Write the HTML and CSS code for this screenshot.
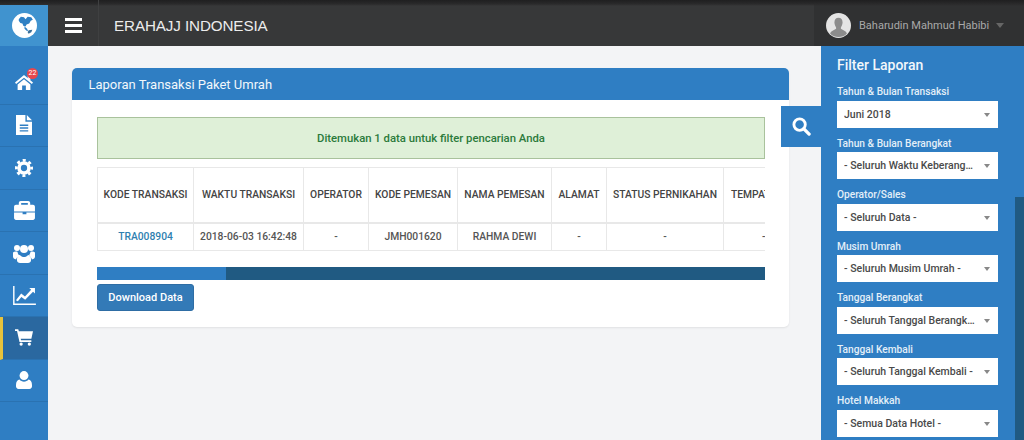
FILE: index.html
```html
<!DOCTYPE html>
<html lang="id">
<head>
<meta charset="utf-8">
<title>Laporan Transaksi Paket Umrah</title>
<link rel="stylesheet" href="styles.css">
</head>
<body>
<div class="app">
  <header class="topbar">
    <div class="logo">
      <svg viewBox="0 0 24 24" width="25" height="25"><circle cx="12" cy="12" r="12" fill="#fff"/><path fill="#2f80c4" d="M6.500 6l2-2.500 3 .5 1.500 2 2-2.500 3.500.5 1.500 2.500-2 1-1.500 2.500-2.500 1-1 2-2-.5-1-2.500-2-.5-1.500-2zM12 13l2.500 2 1 2.500-1.500-.5-2-2z"/><path fill="#3a6f99" d="M16 16.500l3.500-.5-1 2.500-2.500 1.500-1-1.500z"/></svg>
    </div>
    <button class="burger" aria-label="Menu"><span></span><span></span><span></span></button>
    <div class="brand">ERAHAJJ INDONESIA</div>
    <div class="user">
      <svg class="avatar" viewBox="0 0 26 26" width="25" height="25"><circle cx="13" cy="13" r="13" fill="#e4e4e4"/><path fill="#8c8c8c" d="M13 5c3 0 4.500 2.500 4.200 5.500-.2 2-1 3.500-1.700 4.500v1.500l4.500 2.500c.8.500 1.500 1.500 1.700 2.500a13 13 0 0 1-17.400 0c.2-1 .9-2 1.700-2.500l4.500-2.500V15c-.7-1-1.500-2.500-1.700-4.500C8.500 7.500 10 5 13 5z"/></svg>
      <span class="user-name">Baharudin Mahmud Habibi</span>
      <span class="caret"></span>
    </div>
  </header>

  <div class="body-row">
    <nav class="sidebar">
      <a class="nav-item nav-home">
        <span class="icon-wrap">
          <svg viewBox="0 0 24 20" width="18" height="15"><path fill="#fff" d="M12 0l12 10-1.500 2L12 3.500 1.500 12 0 10zM17 1h3.500v6L17 4zM3.500 12.500L12 5.500l8.500 7V20h-6v-6h-5v6h-6z"/></svg>
          <span class="badge">22</span>
        </span>
      </a>
      <a class="nav-item">
        <svg viewBox="0 0 17 21" width="16" height="20"><path fill="#fff" fill-rule="evenodd" d="M0 0h10v7h7v14H0zM11.500 0L17 5.500h-5.500zM4 10v1.500h9V10zm0 3v1.500h9V13zm0 3v1.500h9V16z"/></svg>
      </a>
      <a class="nav-item">
        <svg viewBox="0 0 20 20" width="18" height="18"><circle cx="10" cy="10" r="5.500" fill="none" stroke="#fff" stroke-width="4"/><circle cx="10" cy="10" r="8.500" fill="none" stroke="#fff" stroke-width="3" stroke-dasharray="3.400 3.276" stroke-dashoffset="1.700"/></svg>
      </a>
      <a class="nav-item">
        <svg viewBox="0 0 22 20" width="21" height="19"><path fill="#fff" fill-rule="evenodd" d="M7 0h8c1 0 2 1 2 2v2h3c1 0 2 1 2 2v5H0V6c0-1 1-2 2-2h3V2c0-1 1-2 2-2zm.500 2v2h7V2zM0 12h9v2h4v-2h9v6c0 1-1 2-2 2H2c-1 0-2-1-2-2z"/></svg>
      </a>
      <a class="nav-item">
        <svg viewBox="0 0 22 20" width="22" height="20"><g fill="#fff"><circle cx="4" cy="5" r="3"/><circle cx="18" cy="5" r="3"/><circle cx="11" cy="6" r="4"/><path d="M0 9.500c1-1 2.500-1.200 4.500-.8.200 2 1 3 2 3.800-2 1-3 2.300-3.300 4C1 16 0 15 0 13.500zM22 9.500c-1-1-2.500-1.200-4.500-.8-.2 2-1 3-2 3.800 2 1 3 2.300 3.300 4 2.200-.5 3.200-1.500 3.200-3zM7 12c1 1.500 2.500 2 4 2s3-.5 4-2c2 .5 3 2 3 4v1.500c0 1.500-1.500 2.500-3 2.500H7c-1.500 0-3-1-3-2.500V16c0-2 1-3.500 3-4z"/></g></svg>
      </a>
      <a class="nav-item">
        <svg viewBox="0 0 24 20" width="23" height="19"><path fill="#fff" d="M0 0h1.500v18.500H24V20H0zM3 15l5.500-7 4 3L19 4l-2-2h6v6l-2-2-8.300 8.500-4-3L5 16z"/></svg>
      </a>
      <a class="nav-item nav-active">
        <svg viewBox="0 0 22 20" width="18" height="17"><path fill="#fff" d="M0 0h4l.7 2.500H22l-2 9H7l.4 2H20v2H5.500L2.500 2H0z"/><circle fill="#fff" cx="7.500" cy="18" r="2"/><circle fill="#fff" cx="17.500" cy="18" r="2"/></svg>
      </a>
      <a class="nav-item">
        <svg viewBox="0 0 18 20" width="16" height="18"><g fill="#fff"><circle cx="9" cy="5" r="5"/><path d="M4 9.500c1 1.500 3 2.500 5 2.500s4-1 5-2.500c2.500 .5 4 2.500 4 6v1.500c0 1.500-1 3-3 3H3c-2 0-3-1.500-3-3v-1.500c0-3.500 1.500-5.500 4-6z"/></g></svg>
      </a>
    </nav>

    <main class="content">
      <section class="panel">
        <h2 class="panel-head">Laporan Transaksi Paket Umrah</h2>
        <div class="panel-body">
          <div class="alert">Ditemukan 1 data untuk filter pencarian Anda</div>
          <div class="table-wrap">
            <table class="report">
              <thead>
                <tr>
                  <th class="c1">KODE TRANSAKSI</th>
                  <th class="c2">WAKTU TRANSAKSI</th>
                  <th class="c3">OPERATOR</th>
                  <th class="c4">KODE PEMESAN</th>
                  <th class="c5">NAMA PEMESAN</th>
                  <th class="c6">ALAMAT</th>
                  <th class="c7">STATUS PERNIKAHAN</th>
                  <th class="c8">TEMPAT LAHIR</th>
                </tr>
              </thead>
              <tbody>
                <tr>
                  <td><a class="code">TRA008904</a></td>
                  <td>2018-06-03 16:42:48</td>
                  <td>-</td>
                  <td>JMH001620</td>
                  <td>RAHMA DEWI</td>
                  <td>-</td>
                  <td>-</td>
                  <td class="last">-</td>
                </tr>
              </tbody>
            </table>
          </div>
          <div class="hscroll"><div class="hscroll-thumb"></div></div>
          <button class="download">Download Data</button>
        </div>
      </section>
    </main>

    <aside class="filter">
      <button class="search-tab" aria-label="Cari">
        <svg viewBox="0 0 20 20" width="19" height="19"><circle cx="8" cy="8" r="6" fill="none" stroke="#fff" stroke-width="3"/><path d="M12.500 12.500L18 18" stroke="#fff" stroke-width="3.500" stroke-linecap="round"/></svg>
      </button>
      <h3 class="filter-title">Filter Laporan</h3>
      <div class="field"><label>Tahun &amp; Bulan Transaksi</label><div class="select"><span>Juni 2018</span></div></div>
      <div class="field"><label>Tahun &amp; Bulan Berangkat</label><div class="select"><span>- Seluruh Waktu Keberangkatan -</span></div></div>
      <div class="field"><label>Operator/Sales</label><div class="select"><span>- Seluruh Data -</span></div></div>
      <div class="field"><label>Musim Umrah</label><div class="select"><span>- Seluruh Musim Umrah -</span></div></div>
      <div class="field"><label>Tanggal Berangkat</label><div class="select"><span>- Seluruh Tanggal Berangkat -</span></div></div>
      <div class="field"><label>Tanggal Kembali</label><div class="select"><span>- Seluruh Tanggal Kembali -</span></div></div>
      <div class="field"><label>Hotel Makkah</label><div class="select"><span>- Semua Data Hotel -</span></div></div>
      <div class="filter-scroll"></div>
    </aside>
  </div>
</div>
</body>
</html>
```

FILE: styles.css
```css
* { box-sizing: border-box; }
html, body { margin: 0; height: 100%; overflow: hidden; }
body { font-family: Roboto, "Liberation Sans", sans-serif; background: #f3f4f6; color: #4a4a4a; }
.app { width: 1024px; height: 440px; display: flex; flex-direction: column; overflow: hidden; }

.topbar { height: 46px; flex: none; display: flex; align-items: stretch; background: linear-gradient(#1f1f20 0, #2a2a2b 4px, #373839 6px); }
.logo { width: 48px; margin-top: 5px; background: #4093cf; display: flex; align-items: center; justify-content: center; }
.burger { width: 51px; border: 0; border-right: 1px solid #3f4041; background: transparent; display: flex; flex-direction: column; justify-content: center; align-items: center; gap: 3px; padding: 4px 0 0; }
.burger span { display: block; width: 17px; height: 3px; background: #fff; }
.brand { flex: 1; padding-left: 15px; padding-top: 2px; line-height: 47px; font-size: 15.200px; letter-spacing: -.1px; color: #ececec; font-family: "Liberation Sans", sans-serif; }
.user { width: 210px; background: linear-gradient(#1f1f20 0, #2a2a2b 4px, #303132 6px); display: flex; align-items: center; padding: 4px 0 0 12px; }
.avatar { flex: none; }
.user-name { margin-left: 8px; font-size: 11px; color: #a9a9a9; white-space: nowrap; }
.caret { margin-left: 7px; border: 4px solid transparent; border-top: 5px solid #666; border-bottom: 0; }

.body-row { flex: 1; display: flex; min-height: 0; }

.sidebar { width: 48px; flex: none; background: #2f7ec3; padding-top: 16px; display: flex; flex-direction: column; }
.nav-item { height: 42.500px; flex: none; display: flex; align-items: center; justify-content: center; border-bottom: 1px solid #2a72b1; }
.nav-active { background: #2a68a0; border-left: 3px solid #e8c33c; padding-right: 3px; }
.icon-wrap { position: relative; display: flex; }
.badge { position: absolute; top: -7px; right: -5px; width: 11px; height: 11px; border-radius: 50%; background: #e8474c; color: #fff; font-size: 7px; line-height: 11px; text-align: center; }

.content { flex: 1; min-width: 0; padding: 22px 32px 0 24px; }
.panel { background: #fff; border-radius: 5px; height: 259px; box-shadow: 0 1px 2px rgba(0,0,0,.08); }
.panel-head { margin: 0; height: 32px; background: #2f7ec3; border-radius: 5px 5px 0 0; padding-left: 16.500px; font-size: 13px; font-weight: 400; line-height: 33px; color: #f2f7fb; }
.panel-body { padding: 17px 24px 0 25px; }
.alert { height: 42px; background: #dff0d8; border: 1px solid #a9c29c; font-size: 11.300px; font-weight: 500; line-height: 41px; text-align: center; color: #2b7a3b; }
.table-wrap { margin-top: 8px; height: 84px; overflow: hidden; }
.report { border-collapse: collapse; table-layout: fixed; width: 760px; font-size: 10.300px; color: #4a4a4a; }
.report th, .report td { border: 1px solid #e8e8e8; padding: 0; text-align: center; white-space: nowrap; overflow: hidden; }
.report th { height: 55px; font-weight: 500; color: #444; border-bottom-width: 2px; }
.report td { height: 28px; font-weight: 500; color: #555; }
.c1 { width: 96px; } .c2 { width: 110px; } .c3 { width: 65px; } .c4 { width: 89px; }
.c5 { width: 94px; } .c6 { width: 55px; } .c7 { width: 117px; } .c8 { width: 134px; }
.report .c8 { text-align: left; padding-left: 7px; }
.report .last { text-align: left; padding-left: 38px; }
.code { color: #2f7fb0; }
.hscroll { margin-top: 16px; height: 13px; background: #205a82; }
.hscroll-thumb { width: 129px; height: 100%; background: #2f7ec3; }
.download { display: block; margin-top: 4px; width: 97px; height: 27px; padding: 0; border: 1px solid #2e6da4; border-radius: 3px; background: #337ab7; color: #fff; font: 500 11px Roboto, sans-serif; }

.filter { position: relative; width: 203px; flex: none; background: #2f7ec3; padding: 10px 26px 0 16px; }
.search-tab { position: absolute; left: -40px; top: 60px; width: 40px; height: 41px; border: 0; padding: 0; background: #2f7ec3; display: flex; align-items: center; justify-content: center; }
.filter-title { margin: 0 0 8px; height: 18px; font-size: 14px; font-weight: 500; line-height: 18px; color: #f2f7fb; }
.field { height: 51.500px; }
.field label { display: block; height: 18.500px; font-size: 10.200px; font-weight: 500; line-height: 20px; color: #e3eff8; }
.select { position: relative; width: 161px; height: 27px; background: #fff; padding-left: 7px; padding-right: 21px; font-size: 10.500px; font-weight: 500; line-height: 27px; color: #4a4a4a; white-space: nowrap; }
.select span { display: block; overflow: hidden; text-overflow: ellipsis; }
.select::after { content: ""; position: absolute; right: 8px; top: 12px; border: 3px solid transparent; border-top: 4px solid #888; border-bottom: 0; }
.filter-scroll { position: absolute; right: 0; top: 151px; bottom: 0; width: 9px; background: #205a82; }
```
